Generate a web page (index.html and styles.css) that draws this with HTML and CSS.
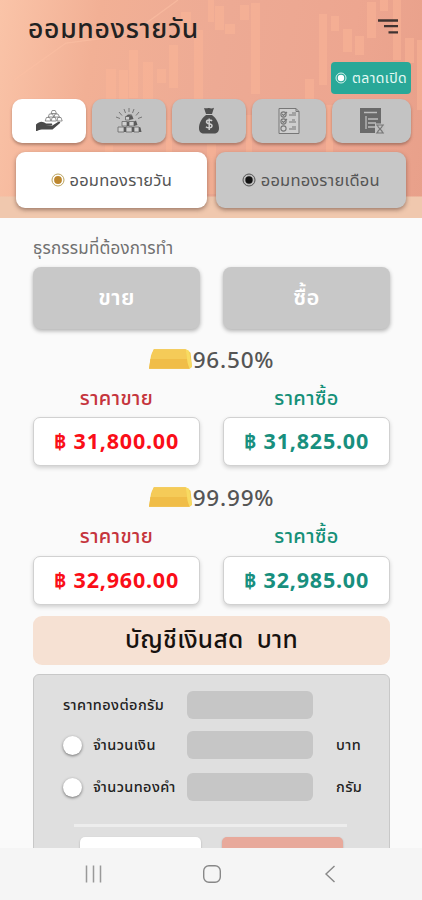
FILE: index.html
```html
<!DOCTYPE html>
<html lang="th">
<head>
<meta charset="utf-8">
<meta name="viewport" content="width=device-width, initial-scale=1">
<title>ออมทองรายวัน</title>
<link rel="stylesheet" href="styles.css">
</head>
<body>
<div class="app">
  <header class="header">
    <svg class="chart" viewBox="0 0 422 218" aria-hidden="true">
      <g fill="#fcb697" opacity=".5">
        <path d="M106 69h10v35h-10zM119 70h9v30h-9zM129 50h9v48h-9zM143 62h10v50h-10zM157 69h9v14h-9zM169 45h9v43h-9zM194 30h9v78h-9zM215 6h9v24h-9zM225 24h10v10h-10zM240 5h9v15h-9zM251 3h9v91h-9zM181 12h10v24h-10zM208 0h6v22h-6z"/>
        <path d="M319 14h8v71h-8zM331 16h8v15h-8zM343 29h9v23h-9zM355 36h9v19h-9zM367 2h9v36h-9zM380 0h8v11h-8zM393 0h8v60h-8zM405 38h9v25h-9zM417 40h5v70h-5zM305 79h9v20h-9zM166 120h6v70h-6zM246 115h6v70h-6zM326 105h7v85h-7zM105 145h8v10h-8zM207 144h9v50h-9z"/>
      </g>
      <path d="M14 80L66 43L130 35L178 0" fill="none" stroke="#fcc0a4" stroke-width="1.3" opacity=".6"/>
    </svg>
    <div class="titlebar">
      <h1 class="title">ออมทองรายวัน</h1>
      <svg class="menu" viewBox="0 0 20 16"><path d="M0 1.500h20M6 7.200h14M10.500 13.300h9.500" stroke="#403331" stroke-width="2.300"/></svg>
    </div>
    <div class="status"><svg class="dot" viewBox="0 0 12 12"><circle cx="6" cy="6" r="5" fill="none" stroke="#d5f3ed" stroke-width="1"/><circle cx="6" cy="6" r="3.200" fill="#fff"/></svg><span>ตลาดเปิด</span></div>
    <nav class="tabs">
      <a class="tab active"><svg width="28" height="24" viewBox="0 0 28 24"><g fill="#fff" stroke="#777" stroke-width=".8"><path d="M16 4.500l1.200-3h3l1.300 3zM13.200 8l1.200-3h3.300l1 3zM19 8l1-3h3l1.500 3zM10.200 12l1.200-3.500h3.400l1 3.500zM16.200 12l1-3.500h3.200l1 3.500zM22 12l.8-3.500H26l1.200 3.500z"/></g><path d="M1 15.500c4-4 7-3 10-1h5c2 0 1.500 2.300-.5 2.300l-5 .2h6l6.500-4c2-1 3 .3 1.500 1.500l-7 6H9c-3 0-5 .3-7 1.500H1z" fill="#4a4a4a"/></svg></a>
      <a class="tab"><svg width="28" height="26" viewBox="0 0 28 26"><path d="M14 0v4M9 1l1.500 4M19 1l-1.500 4M4 4l3 3.500M24 4l-3 3.500M1 9l4 1.500M27 9l-4 1.500" stroke="#777" stroke-width="1"/><g fill="#d0d0d0" stroke="#6f6f6f" stroke-width=".9"><path d="M10.500 12V8.500h4V12zM7 18v-4.500h5V18zM14 18v-4.500h5V18zM3 24v-5h6v5zM11 24v-5h6v5zM19 24v-5h5v5z"/></g><path d="M14.500 12V8.500l2.500-1.500 1.500 4zM12 18v-4.500h2V18zM19 18v-4.500l2-1 1.500 4.500zM9 24v-5h2v5zM17 24v-5h2v5zM24 24v-5l1.500.5 1 4.500zM10.500 8.500L13 6.500h4l-2.500 2z" fill="#5b5b5b"/></svg></a>
      <a class="tab"><svg width="24" height="28" viewBox="0 0 24 28"><path d="M7 1c2.500 1 3.500-.5 5 0s3 .8 5-.2l-2 6.200H9zM9 8h6c4 3 7 8 7 13 0 4-2 5.500-5 5.500H7c-3 0-5-1.500-5-5.500 0-5 3-10 7-13z" fill="#4f4f4f"/><path d="M8.500 7.500h7" stroke="#c4c4c4"/><path d="M15 14c-1-1.500-5.500-1.500-5.500 1s5.500 1.200 5.500 3.800-4.500 2.500-6 1M12.200 11.500V23" fill="none" stroke="#d0d0d0" stroke-width="1.500"/></svg></a>
      <a class="tab"><svg width="24" height="28" viewBox="0 0 24 28"><path d="M2 1.500h17l3 3V26.500H2z" fill="#cecece" stroke="#777"/><path d="M19 1.500v3h3" fill="none" stroke="#777"/><g fill="none" stroke="#777" stroke-width="1.100"><circle cx="6.500" cy="7.500" r="2.600"/><circle cx="6.500" cy="14.500" r="2.600"/><circle cx="6.500" cy="21.500" r="2.600"/><path d="M5 7l1.500 1.500L10 5M5 14l1.500 1.500L10 12M12 8h7M12 15h7M12 22h7M15 6h4M15 13h3M15 20h4"/></g></svg></a>
      <a class="tab"><svg width="26" height="28" viewBox="0 0 26 28"><path d="M1 1h21v25H1z" fill="#6a6a6a"/><path d="M5 5.500h13M7 9v13M9 12h10M9 16h8M9 20h7" stroke="#bdbdbd" stroke-width="1.300"/><path d="M16 16.500h10v10.500H16z" fill="#c0c0c0"/><path d="M17 18h8M17 26h8M18.500 18c0 4 5 4 5 8M23.500 18c0 4-5 4-5 8" fill="none" stroke="#777" stroke-width="1.200"/></svg></a>
    </nav>
    <div class="segments">
      <button class="segment active"><svg class="radio" viewBox="0 0 14 14"><circle cx="7" cy="7" r="6" fill="#fff" stroke="#bba45e" stroke-width="1"/><circle cx="7" cy="7" r="3.900" fill="#bd872e"/></svg><span>ออมทองรายวัน</span></button>
      <button class="segment"><svg class="radio" viewBox="0 0 14 14"><circle cx="7" cy="7" r="6" fill="#bdbdbd" stroke="#555" stroke-width="1"/><circle cx="7" cy="7" r="3.700" fill="#111"/></svg><span>ออมทองรายเดือน</span></button>
    </div>
  </header>
  <main class="content">
    <p class="prompt">ธุรกรรมที่ต้องการทำ</p>
    <div class="pair">
      <button class="action">ขาย</button>
      <button class="action">ซื้อ</button>
    </div>
    <section class="quote">
      <h2 class="purity"><svg class="bar" viewBox="0 0 44 20"><path d="M5 0h32.500l5 3.500L44 18l-2.500 2H0L2 7z" fill="#f1c54d"/><path d="M5 0h32.500l2 15H1L3 4z" fill="#f5cb58"/><path d="M1.500 10h38l2 10H0z" fill="#f0bd48"/><path d="M37.500 0l3.500 1.500L44 18l-2.500 2-2-6z" fill="#f8db62"/></svg>96.50%</h2>
      <div class="pair labels"><span class="sell">ราคาขาย</span><span class="buy">ราคาซื้อ</span></div>
      <div class="pair"><div class="price red">฿ 31,800.00</div><div class="price green">฿ 31,825.00</div></div>
    </section>
    <section class="quote second">
      <h2 class="purity"><svg class="bar" viewBox="0 0 44 20"><path d="M5 0h32.500l5 3.500L44 18l-2.500 2H0L2 7z" fill="#f1c54d"/><path d="M5 0h32.500l2 15H1L3 4z" fill="#f5cb58"/><path d="M1.500 10h38l2 10H0z" fill="#f0bd48"/><path d="M37.500 0l3.500 1.500L44 18l-2.500 2-2-6z" fill="#f8db62"/></svg>99.99%</h2>
      <div class="pair labels"><span class="sell">ราคาขาย</span><span class="buy">ราคาซื้อ</span></div>
      <div class="pair"><div class="price red">฿ 32,960.00</div><div class="price green">฿ 32,985.00</div></div>
    </section>
    <div class="cash">บัญชีเงินสด&nbsp; บาท</div>
    <section class="panel">
      <div class="row"><span class="name wide">ราคาทองต่อกรัม</span><span class="field"></span></div>
      <div class="row"><span class="knob"></span><span class="name">จำนวนเงิน</span><span class="field"></span><span class="unit">บาท</span></div>
      <div class="row last"><span class="knob"></span><span class="name">จำนวนทองคำ</span><span class="field"></span><span class="unit">กรัม</span></div>
      <hr class="rule">
      <div class="submit"><span class="cancel"></span><span class="confirm"></span></div>
    </section>
  </main>
  <footer class="sysnav">
    <svg viewBox="0 0 20 20"><path d="M2.500 1.500v17M9.500 1.500v17M16.500 1.500v17" stroke="#999" stroke-width="1.500"/></svg>
    <svg viewBox="0 0 20 20"><rect x="1.700" y="1.700" width="16.600" height="16.600" rx="5.200" fill="none" stroke="#888" stroke-width="1.400"/></svg>
    <svg viewBox="0 0 20 20"><path d="M14.500 2L6 10l8.500 8" fill="none" stroke="#888" stroke-width="1.400"/></svg>
  </footer>
</div>
</body>
</html>
```
FILE: styles.css
```css
* { box-sizing: border-box; }
body {
  margin: 0;
  background: #fafafa;
  font-family: "Noto Sans", "Noto Sans Thai", sans-serif;
  color: #222;
}
h1, h2, p { margin: 0; font-weight: 400; }
button { border: 0; padding: 0; font: inherit; color: inherit; }
svg { display: block; flex: none; }
.app { width: 422px; height: 900px; overflow: hidden; display: flex; flex-direction: column; }
.header {
  position: relative;
  height: 218px;
  flex: none;
  background:
    linear-gradient(transparent 196px, #f0c8ae 197px),
    linear-gradient(100deg, #fac4a8 0, #f2b095 22%, #edaa94 50%, #eda690 78%, #e8a08a 100%);
}
.chart { position: absolute; inset: 0; width: 422px; height: 218px; }
.titlebar { position: relative; display: flex; justify-content: space-between; height: 62px; padding: 0 24px 0 28px; }
.title { font-size: 26.500px; letter-spacing: .7px; line-height: 57px; font-weight: 500; white-space: nowrap; }
.menu { width: 20px; height: 16px; margin-top: 19px; }
.status {
  position: relative;
  display: flex; align-items: center; justify-content: center; gap: 5px;
  width: 80px; height: 32px; margin-left: 331px;
  border-radius: 4px; background: #29a898; color: #e4faf5;
  font-size: 14px; letter-spacing: .4px; white-space: nowrap;
}
.dot { width: 12px; height: 12px; }
.tabs { position: relative; display: grid; grid-template-columns: 74px 74px 74px 74px 79px; gap: 6px; padding: 5px 11px 0 12px; }
.tab { display: grid; place-items: center; height: 44px; border-radius: 10px; background: #c3c3c3; box-shadow: 0 2px 3px rgba(80, 50, 40, .4); }
.tab.active, .segment.active { background: #fff; }
.segments { position: relative; display: flex; gap: 9px; padding: 9px 16px 0; }
.segment {
  display: flex; align-items: center; justify-content: center; gap: 5px;
  width: 190.500px; height: 56px; border-radius: 9px; background: #c7c7c7; color: #555;
  font-size: 16.500px; letter-spacing: .2px; box-shadow: 0 2px 4px rgba(80, 50, 40, .5); white-space: nowrap;
}
.radio { width: 14px; height: 14px; }
.content { height: 630px; flex: none; padding: 0 32px 0 33px; overflow: hidden; }
.prompt { height: 49px; line-height: 59px; font-size: 17px; letter-spacing: .2px; color: #707070; white-space: nowrap; }
.pair { display: grid; grid-template-columns: 167px 167px; justify-content: space-between; }
.action { height: 62px; padding-bottom: 1px; border-radius: 8px; background: #c8c8c8; color: #fff; font-size: 22px; letter-spacing: .3px; font-weight: 600; box-shadow: 0 2px 4px rgba(0, 0, 0, .3); }
.quote { padding-top: 16px; }
.second { padding-top: 17px; height: 139px; }
.purity { display: flex; align-items: center; justify-content: center; gap: 1px; height: 30px; padding-bottom: 2px; font-size: 22.500px; letter-spacing: .8px; font-weight: 500; color: #555; }
.bar { width: 43px; height: 20px; }
.labels { height: 42px; line-height: 45px; text-align: center; font-size: 20px; letter-spacing: .4px; font-weight: 500; }
.second .labels { height: 43px; line-height: 46px; }
.sell { color: #c5343d; }
.buy { color: #159078; }
.price {
  height: 49px; border: 1px solid #d1d1d1; border-radius: 7px; background: #fff;
  text-align: center; line-height: 45px; font-size: 21.500px; letter-spacing: .8px; font-weight: 700; white-space: nowrap;
  box-shadow: 0 2px 4px rgba(0, 0, 0, .17);
}
.red { color: #fa0e18; }
.green { color: #188f7e; }
.cash { height: 49px; margin-top: 11px; border-radius: 9px; background: #f6e1d3; text-align: center; line-height: 46px; font-size: 24.500px; letter-spacing: .3px; font-weight: 500; color: #17120f; white-space: nowrap; }
.panel { height: 190px; margin-top: 9px; padding: 16px 0 0 29px; border: 1px solid #c8c8c8; border-radius: 6px; background: #dfdfdf; }
.row { display: flex; align-items: center; height: 28px; margin-bottom: 12px; font-size: 14.500px; letter-spacing: .4px; font-weight: 500; white-space: nowrap; }
.row.last { margin: 14px 0 0; }
.knob { width: 19px; height: 19px; border-radius: 50%; background: #fff; box-shadow: 0 1px 3px rgba(0, 0, 0, .5); }
.name { width: 94px; margin-left: 11px; }
.name.wide { width: 124px; margin-left: 0; }
.field { width: 126px; height: 28px; border-radius: 6px; background: #c6c6c6; }
.unit { margin-left: 23px; }
.rule { width: 273px; height: 3px; margin: 23px 0 10px 11px; border: 0; background: #ededed; }
.submit { display: flex; gap: 21px; padding-left: 17px; }
.submit span { width: 121px; height: 40px; border-radius: 5px; box-shadow: 0 1px 2px rgba(0, 0, 0, .25); }
.cancel { background: #fff; }
.confirm { background: #e8a99b; }
.sysnav { display: flex; justify-content: space-between; padding: 16px 82px 0 84px; height: 52px; flex: none; background: #f5f5f5; }
.sysnav svg { width: 20px; height: 20px; }
```
